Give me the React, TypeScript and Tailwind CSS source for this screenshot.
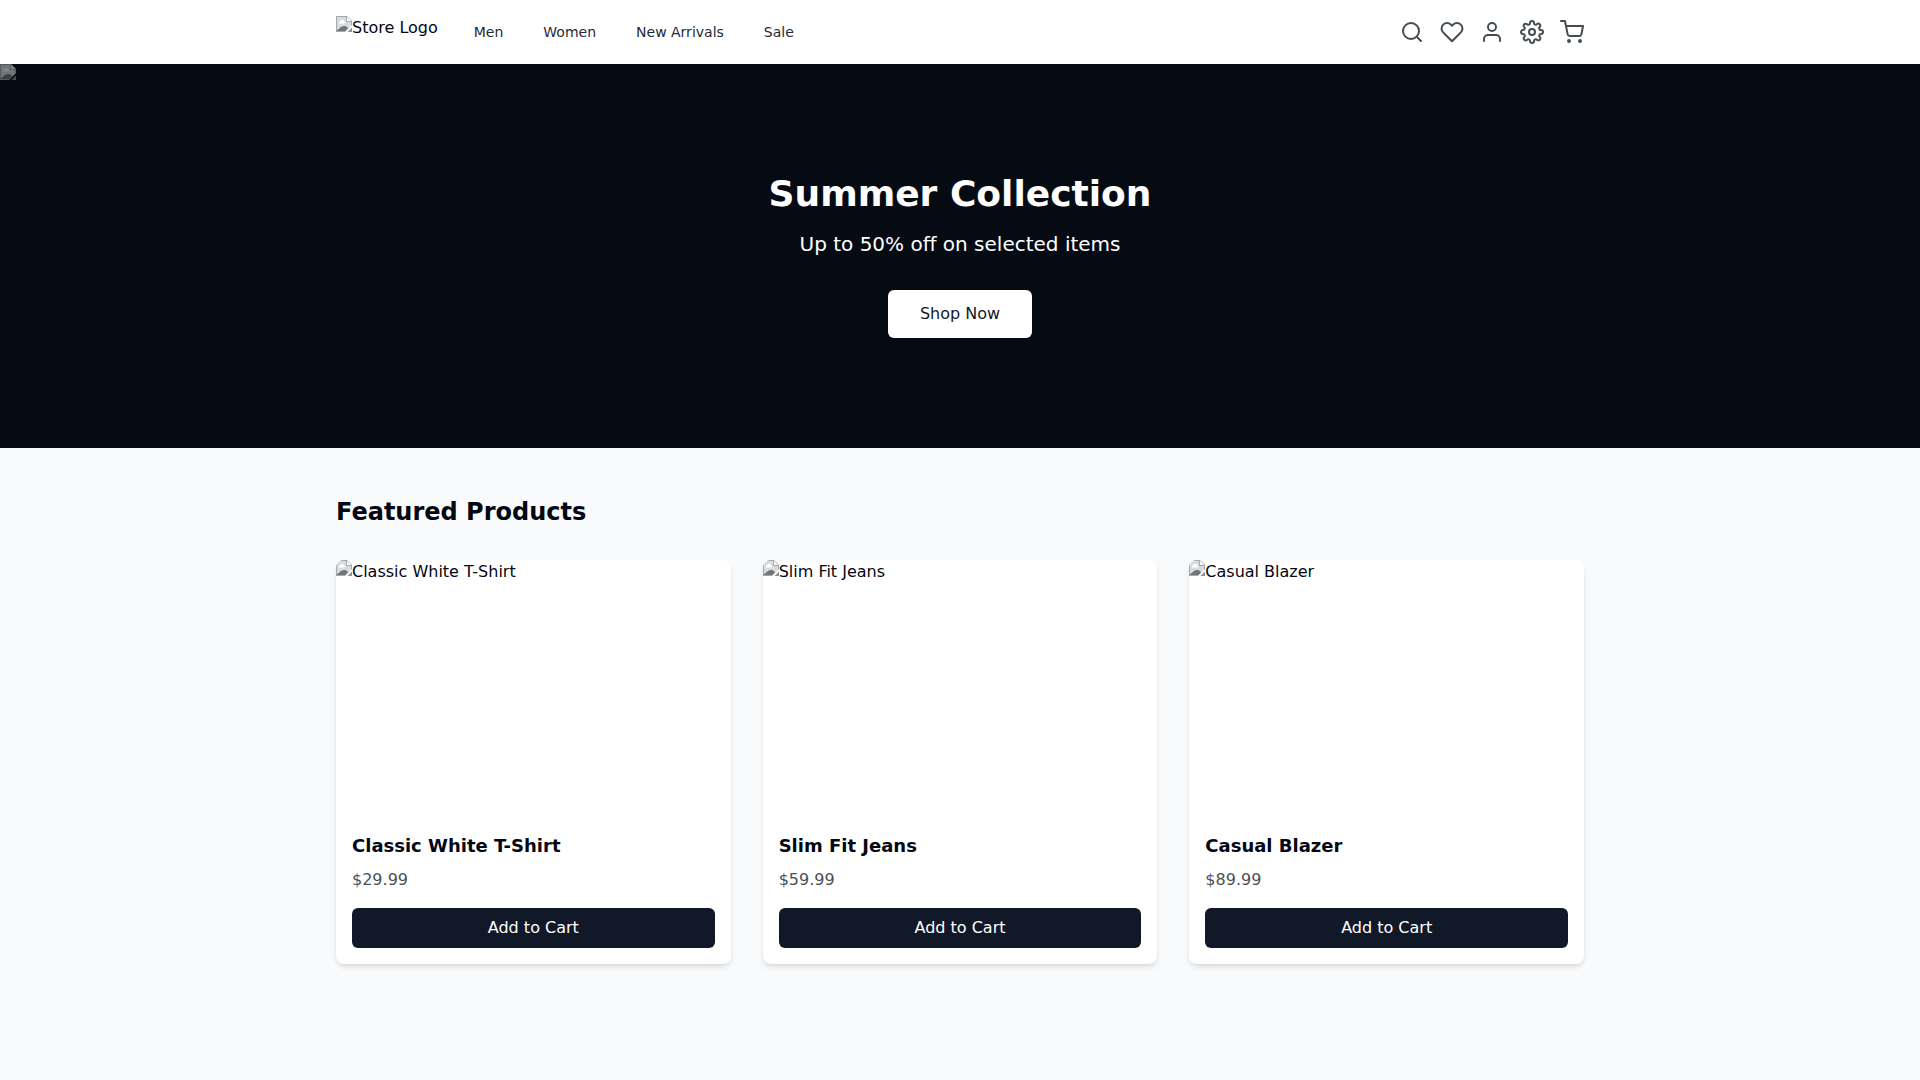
import { FiSearch, FiHeart, FiUser, FiSettings, FiShoppingCart } from 'react-icons/fi';

const navLinks = ['Men', 'Women', 'New Arrivals', 'Sale'];

const actions = [
  { label: 'Search', Icon: FiSearch },
  { label: 'Wishlist', Icon: FiHeart },
  { label: 'Account', Icon: FiUser },
  { label: 'Settings', Icon: FiSettings },
  { label: 'Cart', Icon: FiShoppingCart },
];

const products = [
  { id: 1, name: 'Classic White T-Shirt', price: 29.99 },
  { id: 2, name: 'Slim Fit Jeans', price: 59.99 },
  { id: 3, name: 'Casual Blazer', price: 89.99 },
];

// Placeholder for a picture that is not available
const MissingImage = ({ className = '' }: { className?: string }) => (
  <svg className={`w-4 h-4 shrink-0 ${className}`} viewBox="0 0 16 16" aria-hidden="true">
    <path d="M0 0h11l5 5v4l-7 7H0z" fill="#d9dcdf" />
    <path d="M3 6.500a1.500 1.500 0 0 1 1.500-1.500A1.800 1.800 0 0 1 8 5.500a1 1 0 0 1 0 2H3z" fill="#fff" />
    <path d="M1 15.500v-1.500c2-.5 3.500-4 7-4 1.800 0 3 .5 4 2.500l-3 3z" fill="#6f7874" />
    <path d="M16 11.500v4.500h-4.500z" fill="#8b9390" />
    <path d="M.5 16V.5H11L15.500 5v4.500M.5 15.500H9" fill="none" stroke="#a3a8ab" />
    <path d="M11 1v4h4z" fill="#fff" />
    <path d="M10.500 1v4.500H15" fill="none" stroke="#a3a8ab" />
  </svg>
);

const Header = () => {
  return (
    <header className="bg-white shadow-sm">
      <div className="max-w-7xl mx-auto px-4 h-16 flex items-center justify-between">
        <div className="flex items-center">
          <a href="#" className="flex items-start h-8">
            <MissingImage />
            <span className="leading-6">Store Logo</span>
          </a>
          <nav className="ml-9 flex gap-10">
            {navLinks.map((link) => (
              <a key={link} href="#" className="text-sm text-[#1f2937] hover:text-black">
                {link}
              </a>
            ))}
          </nav>
        </div>

        <div className="flex items-center gap-4">
          {actions.map(({ label, Icon }) => (
            <button key={label} aria-label={label} className="text-[#454d54] hover:text-black">
              <Icon size={24} />
            </button>
          ))}
        </div>
      </div>
    </header>
  );
};

const Hero = () => {
  return (
    <section className="relative h-96 bg-[#060b13] flex items-center justify-center">
      <MissingImage className="absolute top-0 left-0 opacity-50" />
      <div className="text-center text-white">
        <h1 className="text-4xl font-bold mb-4">Summer Collection</h1>
        <p className="text-xl mb-8">Up to 50% off on selected items</p>
        <button className="bg-white text-[#111827] px-8 py-3 rounded-md hover:bg-gray-100">
          Shop Now
        </button>
      </div>
    </section>
  );
};

const ProductCard = ({ name, price }: { name: string; price: number }) => {
  return (
    <div className="bg-white rounded-lg shadow-md overflow-hidden">
      <div className="h-64 flex items-start">
        <MissingImage />
        <span className="leading-6">{name}</span>
      </div>
      <div className="p-4">
        <h3 className="text-lg font-semibold">{name}</h3>
        <p className="mt-2 text-[#4b5156]">${price}</p>
        <button className="mt-4 w-full bg-[#111827] text-white py-2 rounded-md hover:bg-gray-800">
          Add to Cart
        </button>
      </div>
    </div>
  );
};

const App = () => {
  return (
    <div className="min-h-screen bg-[#f9fafb] text-[#030712] font-['DejaVu_Sans',sans-serif]">
      <Header />
      <Hero />
      <main className="max-w-7xl mx-auto px-4 py-12">
        <h2 className="text-2xl font-bold mb-8">Featured Products</h2>
        <div className="grid grid-cols-1 md:grid-cols-3 gap-8">
          {products.map((product) => (
            <ProductCard key={product.id} name={product.name} price={product.price} />
          ))}
        </div>
      </main>
    </div>
  );
};

export default App;
